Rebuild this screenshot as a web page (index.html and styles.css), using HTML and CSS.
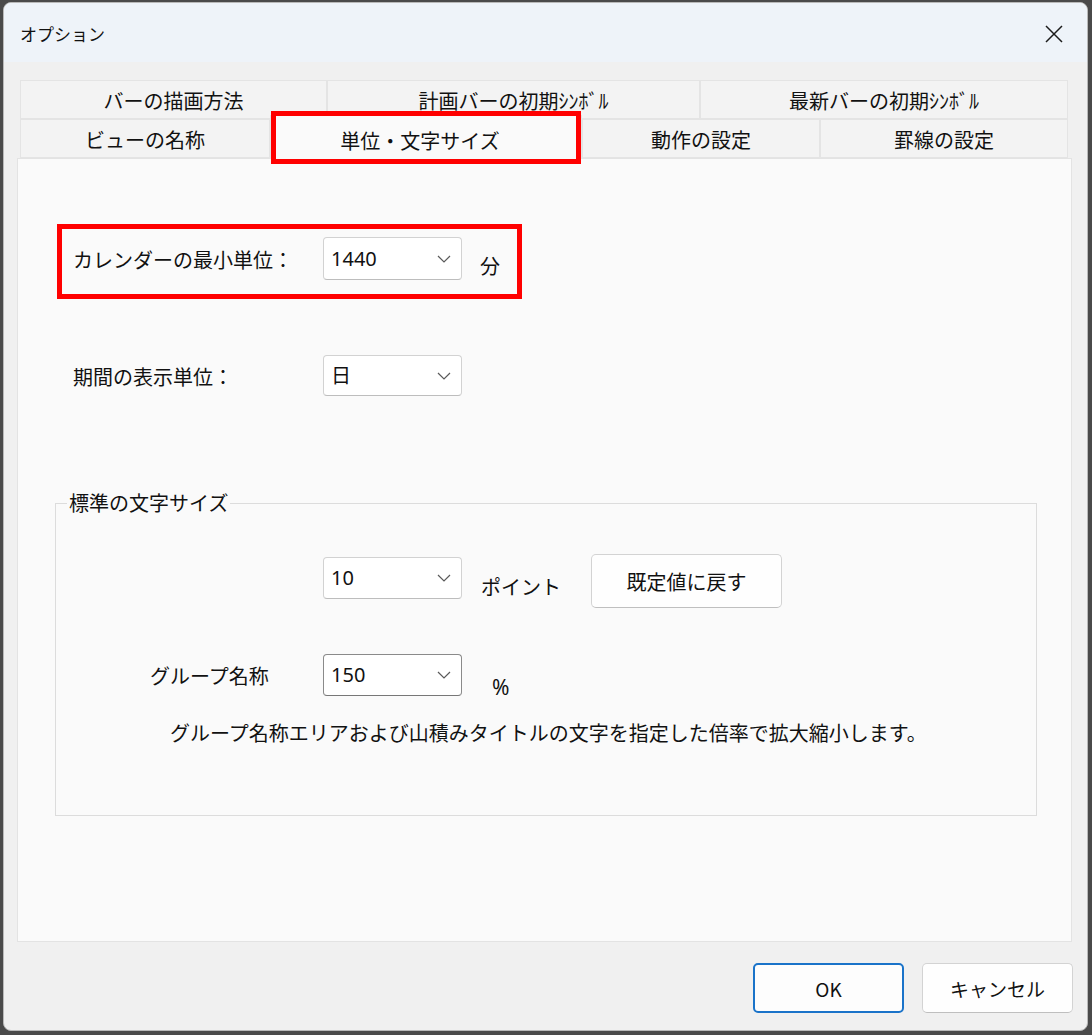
FILE: index.html
```html
<!DOCTYPE html>
<html lang="ja">
<head>
<meta charset="utf-8">
<title>オプション</title>
<link rel="stylesheet" href="styles.css">
</head>
<body>
<div class="window">
  <div class="titlebar">
    <span class="title">オプション</span>
    <svg class="close" width="20" height="20" viewBox="0 0 20 20"><path d="M2 2 L18 18 M18 2 L2 18" stroke="#1b1b1b" stroke-width="1.5" fill="none"/></svg>
  </div>
  <div class="content">
    <div class="tabs">
      <div class="tabrow">
        <div class="tab w307">バーの描画方法</div>
        <div class="tab w373">計画バーの初期ｼﾝﾎﾞﾙ</div>
        <div class="tab w368">最新バーの初期ｼﾝﾎﾞﾙ</div>
      </div>
      <div class="tabrow">
        <div class="tab w250">ビューの名称</div>
        <div class="tab w312 selected">単位・文字サイズ<span class="mark mark-tab"></span></div>
        <div class="tab w238">動作の設定</div>
        <div class="tab w248">罫線の設定</div>
      </div>
    </div>
    <div class="panel">
      <div class="row row1">
        <span class="label lw250">カレンダーの最小単位：</span>
        <div class="combo"><span class="val">1440</span><svg class="chev" width="14" height="8" viewBox="0 0 14 8"><path d="M1 1 L7 7 L13 1" stroke="#5a5a5a" stroke-width="1.2" fill="none"/></svg></div>
        <span class="unit">分</span>
        <span class="mark mark-row"></span>
      </div>
      <div class="row row2">
        <span class="label lw250">期間の表示単位：</span>
        <div class="combo"><span class="val">日</span><svg class="chev" width="14" height="8" viewBox="0 0 14 8"><path d="M1 1 L7 7 L13 1" stroke="#5a5a5a" stroke-width="1.2" fill="none"/></svg></div>
      </div>
      <fieldset class="group">
        <legend>標準の文字サイズ</legend>
        <div class="grow grow1">
          <div class="combo c-top"><span class="val">10</span><svg class="chev" width="14" height="8" viewBox="0 0 14 8"><path d="M1 1 L7 7 L13 1" stroke="#5a5a5a" stroke-width="1.2" fill="none"/></svg></div>
          <span class="unit2">ポイント</span>
          <button class="btn reset">既定値に戻す</button>
        </div>
        <div class="grow grow2">
          <span class="label lw173">グループ名称</span>
          <div class="combo focus"><span class="val">150</span><svg class="chev" width="14" height="8" viewBox="0 0 14 8"><path d="M1 1 L7 7 L13 1" stroke="#5a5a5a" stroke-width="1.2" fill="none"/></svg></div>
          <span class="pct">%</span>
        </div>
        <p class="desc">グループ名称エリアおよび山積みタイトルの文字を指定した倍率で拡大縮小します。</p>
      </fieldset>
    </div>
    <div class="footer">
      <button class="btn dlg ok">OK</button>
      <button class="btn dlg">キャンセル</button>
    </div>
  </div>
</div>
</body>
</html>
```
FILE: styles.css
```css
* { box-sizing: border-box; }
html, body { margin: 0; }
body {
  width: 1092px;
  height: 1035px;
  background: #4a4a4a;
  padding: 2px 4px 4px 3px;
  font-family: "Noto Sans", "Noto Sans CJK JP", sans-serif;
  color: #111111;
  overflow: hidden;
}
.window {
  width: 1085px;
  height: 1029px;
  border: 1px solid #b9b9b9;
  border-radius: 8px;
  overflow: hidden;
  background: #f0f0f0;
  display: flex;
  flex-direction: column;
}
.titlebar {
  height: 59px;
  flex: none;
  background: #eef3f9;
  display: flex;
  align-items: center;
  justify-content: space-between;
  padding: 0 23px 0 16px;
}
.title {
  font-family: "Noto Sans CJK JP", sans-serif;
  font-size: 17px;
  margin-top: 2px;
}
.close { display: block; margin-top: 2px; }
.content {
  flex: 1;
  display: flex;
  flex-direction: column;
  padding-top: 18px;
}
.tabs { margin-left: 16px; width: 1048px; }
.tabrow { display: flex; height: 39px; }
.tab {
  height: 39px;
  background: #f3f3f3;
  border: 1px solid #e4e4e4;
  display: flex;
  align-items: center;
  justify-content: center;
  font-family: "Noto Sans CJK JP", sans-serif;
  font-size: 20px;
  line-height: 1;
  padding-top: 2px;
}
.w307 { width: 307px; } .w373 { width: 373px; } .w368 { width: 368px; }
.w250 { width: 250px; } .w312 { width: 312px; } .w238 { width: 238px; } .w248 { width: 248px; }
.tab.selected {
  position: relative;
  z-index: 2;
  background: #fafafa;
  border-color: #e4e4e4;
  border-bottom: none;
  height: 44px;
  margin-top: -4px;
  padding-top: 6px;
  padding-right: 12px;
}
.mark {
  position: absolute;
  border: 5px solid #ff0000;
  pointer-events: none;
}
.mark-tab { left: 0; right: 0; top: -5px; bottom: -5px; }
.panel {
  margin-left: 13px;
  width: 1055px;
  height: 784px;
  flex: none;
  background: #fafafa;
  border: 1px solid #e3e3e3;
  padding: 78px 0 0 0;
  position: relative;
  z-index: 1;
}
.row { display: flex; align-items: center; position: relative; height: 43px; margin-left: 55px; }
.row2 { margin-top: 75px; height: 41px; }
.label {
  font-family: "Noto Sans CJK JP", sans-serif;
  font-size: 20px;
  line-height: 26px;
  flex: none;
  padding-top: 2px;
}
.lw250 { width: 250px; }
.lw173 { width: 173px; }
.combo {
  width: 139px;
  height: 100%;
  flex: none;
  background: #ffffff;
  border: 1px solid #d2d2d2;
  border-bottom-color: #bdbdbd;
  border-radius: 4px;
  display: flex;
  align-items: center;
  justify-content: space-between;
  padding: 0 10px 0 7px;
}
.combo.focus { border-color: #8a8a8a; border-bottom-color: #777; }
.val {
  font-family: "Noto Sans", "Noto Sans CJK JP", sans-serif;
  font-size: 20px;
  line-height: 26px;
}
.chev { display: block; }
.unit {
  margin-left: 18px;
  font-family: "Noto Sans CJK JP", sans-serif;
  font-size: 20px;
  margin-top: 14px;
}
.mark-row { left: -16px; top: -13px; width: 465px; height: 75px; }
.group {
  margin: 94px 0 0 37px;
  width: 982px;
  border: 1px solid #dcdcdc;
  padding: 0 0 69px 0;
  min-inline-size: 0;
}
.group legend {
  margin-left: 11px;
  padding: 0 2px;
  font-family: "Noto Sans CJK JP", sans-serif;
  font-size: 20px;
  line-height: 26px;
}
.grow { display: flex; }
.grow1 { margin-top: 38px; padding-left: 267px; align-items: flex-start; height: 54px; }
.grow1 .combo { height: 42px; margin-top: 3px; }
.unit2 {
  width: 129px;
  flex: none;
  padding-left: 19px;
  margin-top: 20px;
  font-family: "Noto Sans CJK JP", sans-serif;
  font-size: 20px;
  line-height: 26px;
}
.btn {
  font-family: "Noto Sans CJK JP", sans-serif;
  color: #111111;
  background: #fefefe;
  border: 1px solid #d3d3d3;
  border-bottom-color: #bfbfbf;
  border-radius: 5px;
  cursor: default;
}
.reset { width: 191px; height: 54px; font-size: 20px; padding: 0; flex: none; }
.grow2 { margin-top: 46px; padding-left: 94px; align-items: center; height: 42px; }
.pct {
  font-family: "Noto Sans", sans-serif;
  font-size: 21px;
  margin-left: 30px;
  align-self: flex-start;
  margin-top: 19px;
}
.desc {
  margin: 24px 0 0 114px;
  font-family: "Noto Sans CJK JP", sans-serif;
  font-size: 20px;
  line-height: 26px;
}
.footer {
  display: flex;
  justify-content: flex-end;
  gap: 18px;
  padding: 21px 14px 0 0;
}
.dlg { width: 151px; height: 50px; font-size: 19px; padding: 0; }
.ok { border: 2px solid #1a73c9; background: #fdfdfd; }
```
